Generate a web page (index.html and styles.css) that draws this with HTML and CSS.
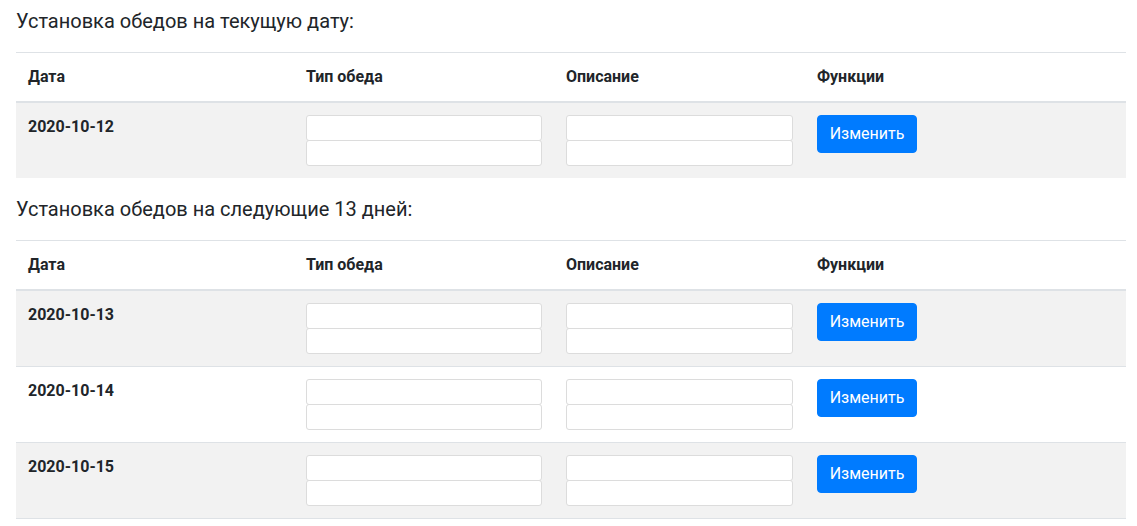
FILE: index.html
```html
<!DOCTYPE html>
<html lang="ru">
<head>
<meta charset="utf-8">
<title>Установка обедов</title>
<link rel="stylesheet" href="styles.css">
</head>
<body>
<div class="page">
  <h5 class="section-title">Установка обедов на текущую дату:</h5>
  <table class="meals">
    <colgroup><col class="c-date"><col class="c-type"><col class="c-desc"><col class="c-fn"></colgroup>
    <thead>
      <tr><th>Дата</th><th>Тип обеда</th><th>Описание</th><th>Функции</th></tr>
    </thead>
    <tbody>
      <tr>
        <th class="date">2020-10-12</th>
        <td><input class="field field-type" type="text"><input class="field field-type" type="text"></td>
        <td><input class="field field-desc" type="text"><input class="field field-desc" type="text"></td>
        <td><button class="btn" type="button">Изменить</button></td>
      </tr>
    </tbody>
  </table>

  <h5 class="section-title next">Установка обедов на следующие 13 дней:</h5>
  <table class="meals meals-more">
    <colgroup><col class="c-date"><col class="c-type"><col class="c-desc"><col class="c-fn"></colgroup>
    <thead>
      <tr><th>Дата</th><th>Тип обеда</th><th>Описание</th><th>Функции</th></tr>
    </thead>
    <tbody>
      <tr><th class="date">2020-10-13</th><td><input class="field field-type" type="text"><input class="field field-type" type="text"></td><td><input class="field field-desc" type="text"><input class="field field-desc" type="text"></td><td><button class="btn" type="button">Изменить</button></td></tr>
      <tr><th class="date">2020-10-14</th><td><input class="field field-type" type="text"><input class="field field-type" type="text"></td><td><input class="field field-desc" type="text"><input class="field field-desc" type="text"></td><td><button class="btn" type="button">Изменить</button></td></tr>
      <tr><th class="date">2020-10-15</th><td><input class="field field-type" type="text"><input class="field field-type" type="text"></td><td><input class="field field-desc" type="text"><input class="field field-desc" type="text"></td><td><button class="btn" type="button">Изменить</button></td></tr>
    </tbody>
  </table>
</div>
</body>
</html>
```
FILE: styles.css
```css
html, body {
  margin: 0;
  padding: 0;
}
body {
  font-family: Roboto, "Liberation Sans", sans-serif;
  font-size: 16px;
  line-height: 1.5;
  color: #212529;
  background: #fff;
}
.page {
  padding: 0 11px 0 16px;
}
.section-title {
  font-size: 20px;
  line-height: 24px;
  font-weight: 400;
  margin: 9px 0 19px;
}
.section-title.next {
  margin-top: 19px;
}
.meals {
  width: 1110px;
  border-collapse: collapse;
  table-layout: fixed;
}
.c-date { width: 278px; }
.c-type { width: 260px; }
.c-desc { width: 251px; }
.c-fn { width: 321px; }
.meals th,
.meals td {
  padding: 12px;
  border-top: 1px solid #dee2e6;
  text-align: left;
  vertical-align: top;
  font-weight: 400;
}
.meals thead th {
  border-bottom: 2px solid #dee2e6;
  font-weight: 700;
}
.meals th.date {
  font-weight: 700;
}
.meals tbody tr:nth-child(odd) {
  background: #f2f2f2;
}
.meals-more tbody tr:last-child > * {
  border-bottom: 1px solid #dee2e6;
}
.field {
  display: block;
  box-sizing: border-box;
  height: 26px;
  margin: 0;
  padding: 0 8px;
  border: 1px solid #dcdcdc;
  border-radius: 3px;
  background: #fff;
  font: 14px Roboto, sans-serif;
}
.field + .field {
  margin-top: -1px;
}
.field-type { width: 236px; }
.field-desc { width: 227px; }
.btn {
  display: inline-block;
  box-sizing: border-box;
  width: 100px;
  margin: 0;
  padding: 6px 0;
  font-family: Roboto, "Liberation Sans", sans-serif;
  font-size: 16px;
  line-height: 24px;
  text-align: center;
  color: #fff;
  background: #007bff;
  border: 1px solid #007bff;
  border-radius: 4px;
  cursor: pointer;
}
```
